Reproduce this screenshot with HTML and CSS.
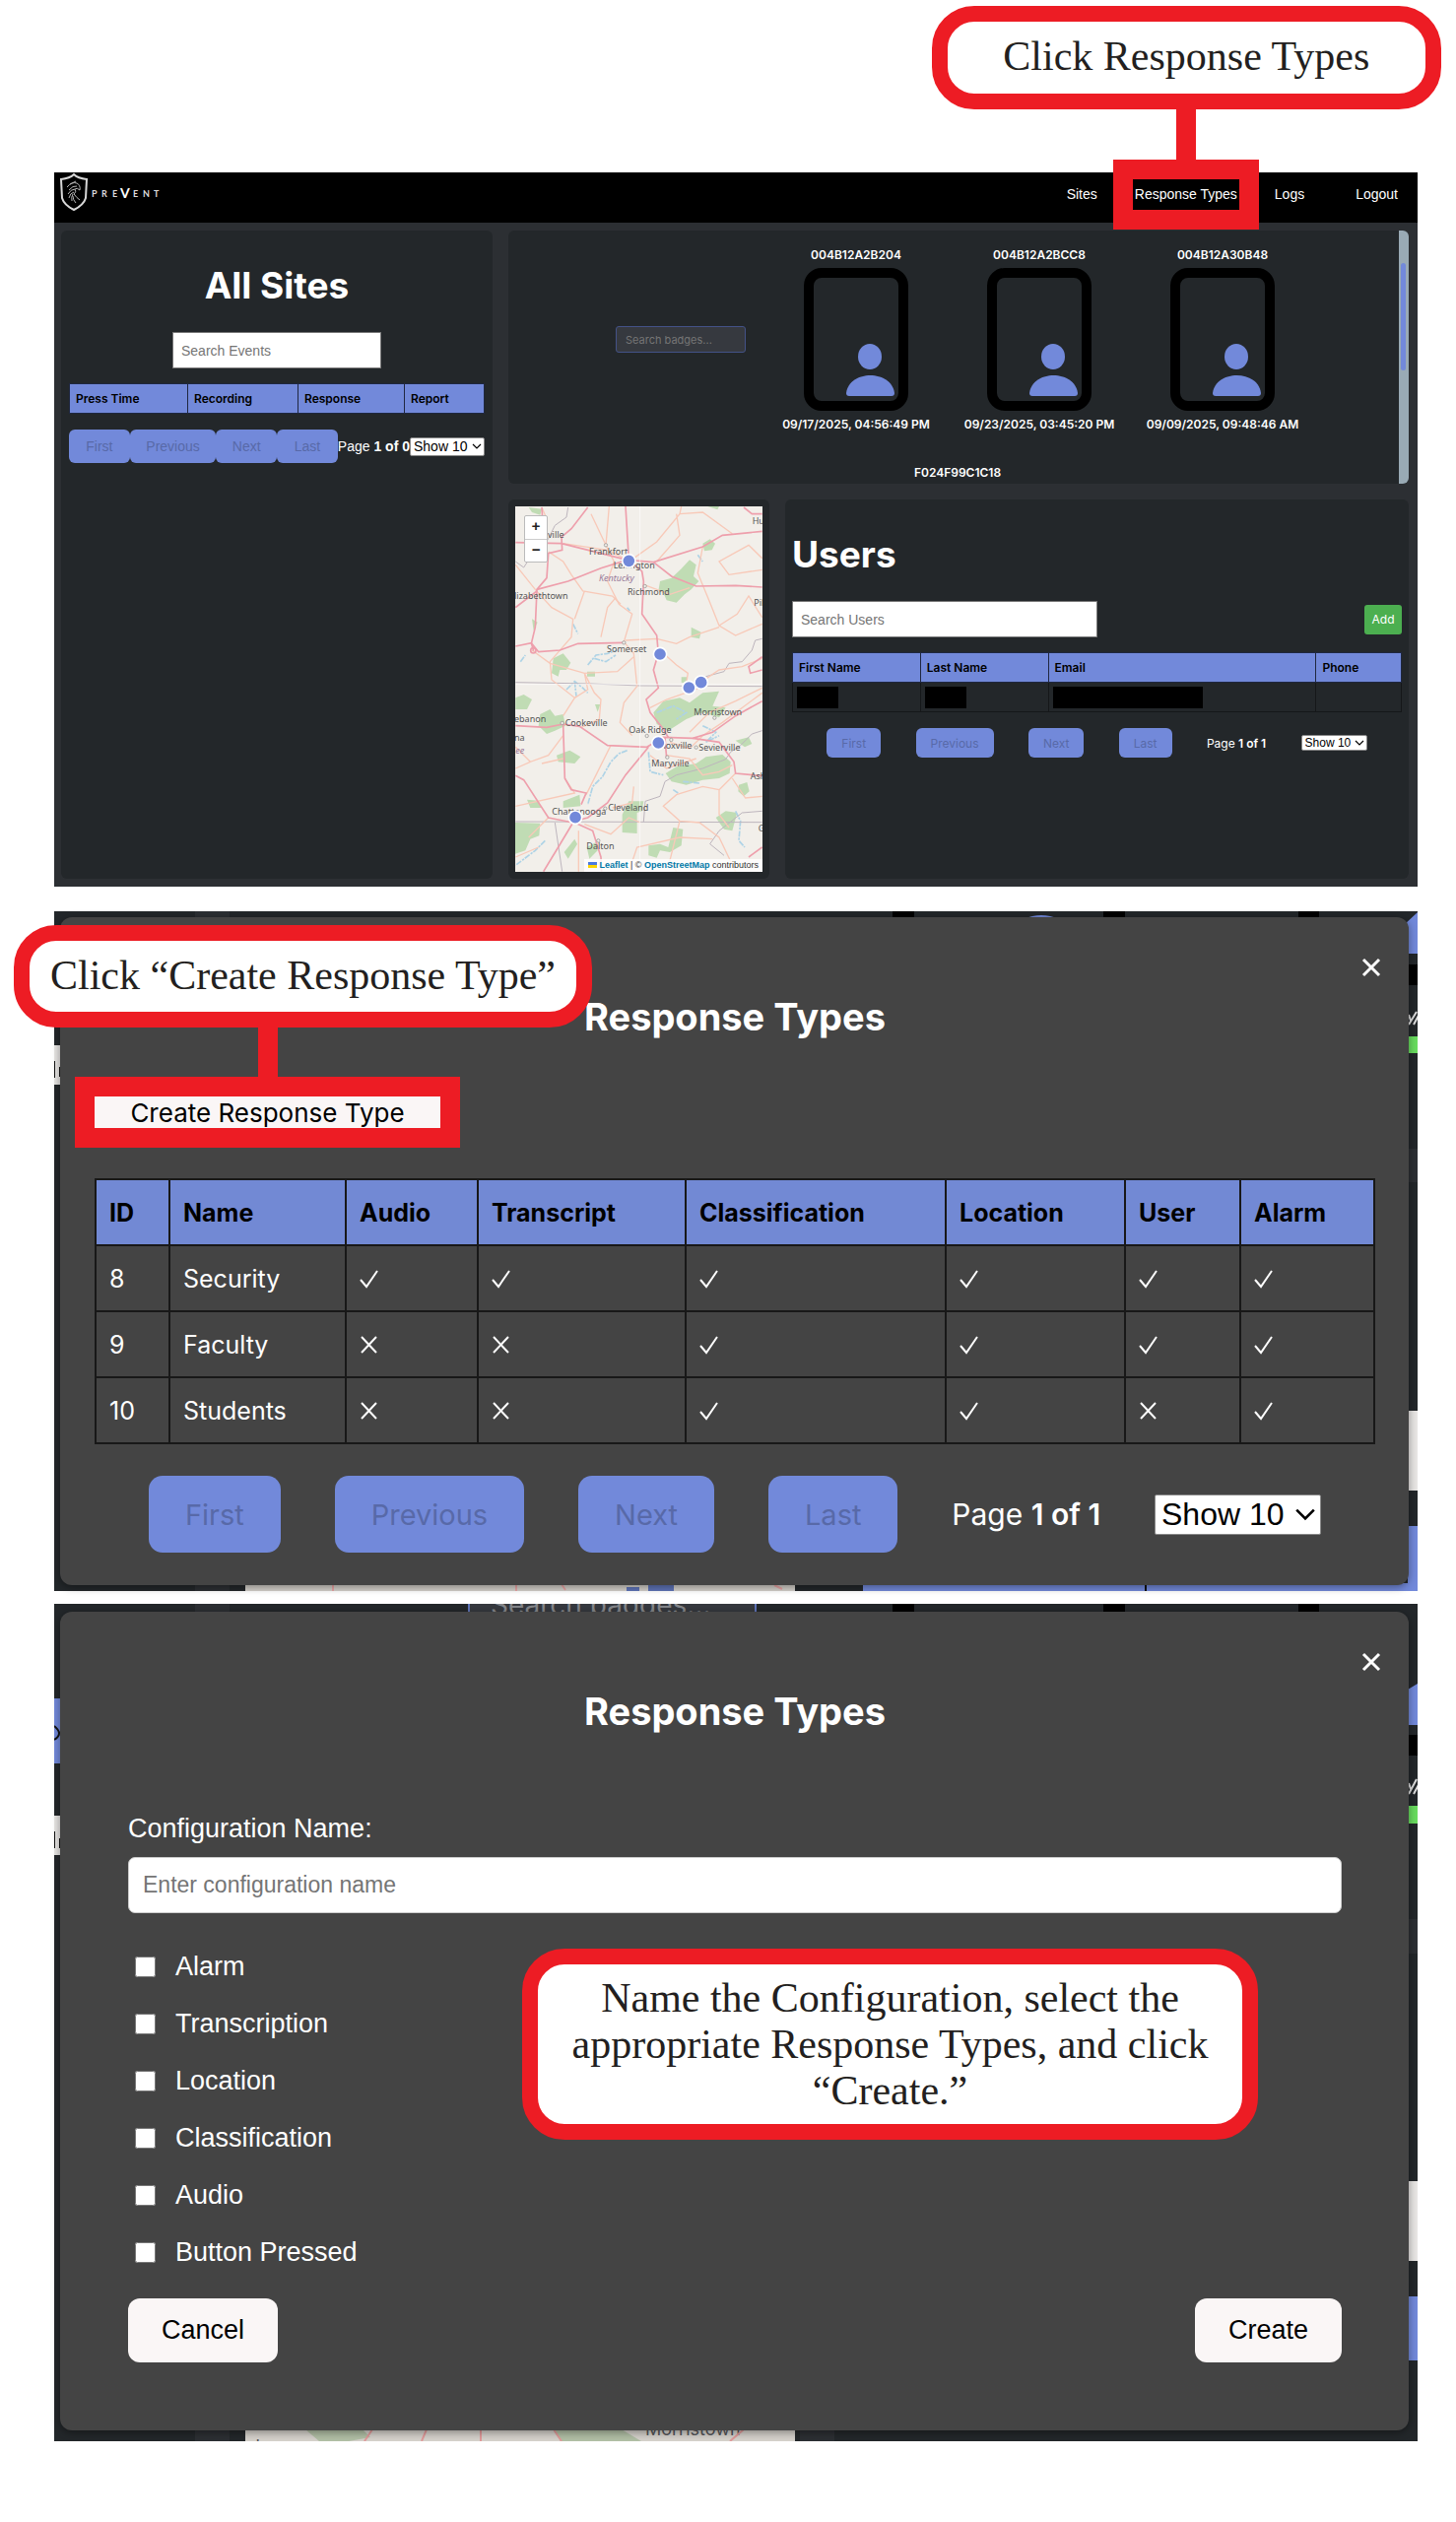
FILE: index.html
```html
<!DOCTYPE html>
<html lang="en">
<head>
<meta charset="utf-8">
<meta name="viewport" content="width=device-width, initial-scale=1">
<title>PreVent – Response Types guide</title>
<link rel="stylesheet" href="styles.css">
</head>
<body>
<main class="guide">

  <section class="shot dashboard">
    <header class="topbar">
      <svg class="logo" width="110" height="44" viewBox="0 0 110 44" role="img" aria-label="PreVent">
        <path d="M1 7 Q10 6 14 2 Q18 6 27 7 L26 26 Q24 33 14 38 Q4 33 2 26 Z" fill="none" stroke="#d8d8d8" stroke-width="2"/>
        <path d="M7 15 Q12 9 17 11 Q21 13 20 18 Q17 15 15 17 Q17 20 14 22 Q17 26 20 28 M9 18 Q13 13 17 14 M8 22 Q11 17 15 17 M9 26 Q10 21 14 20 M12 29 Q11 25 13 22 M16 31 Q13 28 13 24 M10 12 L16 9" fill="none" stroke="#b5b5b5"/>
        <g class="wordmark"><text x="32 42 53" y="25">PRE</text><text class="wordmark-v" x="61" y="26">V</text><text x="74 84 95" y="25">ENT</text></g>
      </svg>
      <nav class="nav">
        <a href="#sites">Sites</a>
        <span class="nav-target">
          <a href="#types">Response Types</a>
          <span class="marker"></span>
          <span class="callout callout-nav">Click Response Types</span>
        </span>
        <a href="#logs">Logs</a>
        <a class="logout" href="#logout">Logout</a>
      </nav>
    </header>

    <div class="board">
      <section class="panel events">
        <h1>All Sites</h1>
        <input class="search" type="text" placeholder="Search Events" aria-label="Search Events">
        <table class="grid-table">
          <colgroup><col class="c28"><col class="c27"><col class="c26"><col></colgroup>
          <thead><tr><th>Press Time</th><th>Recording</th><th>Response</th><th>Report</th></tr></thead>
        </table>
        <div class="pager pager-tight">
          <button disabled>First</button><button disabled>Previous</button><button disabled>Next</button><button disabled>Last</button>
          <span class="page-no">Page <b>1 of 0</b></span>
          <select aria-label="Rows per page"><option>Show 10</option></select>
        </div>
      </section>

      <section class="panel badges">
        <div class="badge-list">
          <input class="badge-search" type="text" placeholder="Search badges..." aria-label="Search badges">
          <div class="badge"><span>004B12A2B204</span>
            <div class="device"><svg width="49" height="53" viewBox="0 0 49 53"><ellipse cx="24" cy="13" rx="12" ry="13"/><path d="M0 50 C3 26 46 26 49 50 Q49 53 46 53 H3 Q0 53 0 50Z"/></svg></div>
            <span>09/17/2025, 04:56:49 PM</span></div>
          <div class="badge"><span>004B12A2BCC8</span>
            <div class="device"><svg width="49" height="53" viewBox="0 0 49 53"><ellipse cx="24" cy="13" rx="12" ry="13"/><path d="M0 50 C3 26 46 26 49 50 Q49 53 46 53 H3 Q0 53 0 50Z"/></svg></div>
            <span>09/23/2025, 03:45:20 PM</span></div>
          <div class="badge"><span>004B12A30B48</span>
            <div class="device"><svg width="49" height="53" viewBox="0 0 49 53"><ellipse cx="24" cy="13" rx="12" ry="13"/><path d="M0 50 C3 26 46 26 49 50 Q49 53 46 53 H3 Q0 53 0 50Z"/></svg></div>
            <span>09/09/2025, 09:48:46 AM</span></div>
          <div class="badge badge-next"><span>F024F99C1C18</span></div>
        </div>
        <div class="scroll-track"><div class="scroll-thumb"></div></div>
      </section>

      <section class="panel map-panel">
        <div class="map">
          <svg class="map-art" viewBox="69 72 753 1113" preserveAspectRatio="xMidYMid slice" aria-label="Map of Kentucky and Tennessee">
            <rect x="69" y="72" width="753" height="1113" fill="#f2efea"/>
            <g fill="#c0dcb4">
              <path d="M510 300 L545 290 L575 262 L600 235 L620 250 L612 285 L628 300 L605 325 L585 340 L560 365 L530 358 L520 335 L505 330Z"/>
              <path d="M640 185 L662 172 L678 185 L668 205 L645 208Z"/><path d="M605 440 L635 455 L630 475 L605 470Z"/>
              <path d="M185 535 L215 520 L238 548 L225 570 L205 570 L200 590 L180 580Z"/>
              <path d="M70 655 L95 645 L120 660 L105 690 L70 690Z"/><path d="M145 705 L175 690 L190 710 L215 705 L222 740 L190 755 L165 765 L140 740Z"/>
              <path d="M195 830 L235 815 L268 835 L250 855 L200 850Z"/>
              <path d="M490 700 L520 665 L570 655 L600 670 L640 640 L690 635 L670 680 L710 685 L690 715 L640 700 L590 720 L535 755 L500 735Z"/>
              <path d="M527 885 L560 865 L620 855 L650 835 L700 828 L725 850 L722 885 L690 900 L640 905 L590 920 L545 910Z"/>
              <path d="M750 920 L775 912 L782 940 L765 955 L748 940Z"/><path d="M740 785 L780 775 L790 795 L768 805Z"/>
              <path d="M395 1010 L415 970 L460 970 L455 1000 L440 1005 L440 1068 L395 1065Z"/>
              <path d="M475 1105 L510 1100 L535 1110 L550 1050 L580 1055 L575 1105 L540 1125 L510 1120 L500 1142 L475 1135Z"/>
              <path d="M69 1035 L145 1037 L142 1075 L115 1085 L100 1120 L69 1130Z"/><path d="M218 1125 L250 1085 L258 1100 L230 1145Z"/>
              <path d="M105 965 L140 968 L148 990 L115 990Z"/><path d="M215 970 L265 950 L268 985 L215 990Z"/>
              <path d="M680 1020 L710 1000 L745 1005 L730 1060 L705 1055Z"/><path d="M287 1110 L315 1095 L320 1120 L295 1145Z"/>
              <path d="M655 72 L690 72 L685 82Z M288 575 H312 V590 H288Z M312 675 L328 675 L320 698Z M575 592 L592 592 L590 610 L575 608Z M120 415 L137 425 L125 450Z M110 75 L150 80 L145 98 L120 90Z"/>
            </g>
            <g fill="none" stroke="#aed3e6" stroke-width="5" stroke-dasharray="18 3 7 4">
              <path d="M290 555 L315 525 L350 520 L380 510 M310 535 L345 545 L375 525"/><path d="M225 630 L250 605 L275 625 L290 640 M250 605 L255 650"/>
              <path d="M410 815 L385 825 L360 850 L335 895 L305 925 L290 980"/><path d="M475 820 L480 880 L520 890"/>
              <path d="M500 700 L550 680 L590 700 L560 720 M640 740 L680 760 L650 790 L690 770"/>
              <path d="M740 1000 L755 1030 L750 1090 L768 1110"/><path d="M160 1090 L130 1120 L70 1165"/>
              <path d="M245 430 L260 460 M85 545 L100 525 M625 220 L640 240 M410 380 L418 390 M550 935 L565 945 M580 910 L630 915"/>
            </g>
            <g fill="none" stroke="#bdb5bd" stroke-width="3">
              <path d="M70 608 L300 612 L450 618 L821 620"/><path d="M70 1032 L821 1034"/>
              <path d="M821 475 L800 480 L790 510 L760 545 L720 550 L705 575 L650 590 L635 618"/>
              <path d="M821 755 L790 765 L755 800 L725 820 L710 842 L640 870 L560 890 L525 910 L510 955 L465 970 L460 1033"/>
              <path d="M230 75 L225 105 L190 130 L170 170 L150 205 L110 235 L95 258 L70 240"/>
              <path d="M190 1035 L212 1184 M821 1000 L760 1005 L690 1060 L662 1100 L705 1135"/>
            </g>
            <g fill="none" stroke="#f8c9b8" stroke-width="4">
              <path d="M355 72 L345 190 L370 240 L350 300 L385 370 L425 400 L400 485 L430 520 L440 620 L400 670 L388 730 L425 770"/>
              <path d="M70 250 L130 325 L180 380 L245 415 L240 470 L175 545 L180 600 L250 655 L215 710"/>
              <path d="M170 210 L215 240 L240 280 L275 330 L365 345 L390 370 M280 330 L250 415 M215 185 L350 205 L405 232"/>
              <path d="M430 230 L500 180 L570 95 L575 72 M570 95 L640 90 L730 155 M500 240 L570 160 L560 95"/>
              <path d="M640 195 L625 275 L660 360 L690 435 L740 465 L821 430 M690 435 L745 400 L780 345 L821 410"/>
              <path d="M405 480 L500 475 L560 490 L600 470 L690 440 M330 470 L350 380 L375 350 M120 510 L175 550 L280 580 L380 575 L430 530"/>
              <path d="M510 510 L560 555 L595 580 L590 610 M630 610 L690 570 L760 560 L821 535 M480 685 L530 660 L630 625"/>
              <path d="M280 580 L310 640 L330 660 L325 720 L270 745 M250 655 L290 630 L280 580"/>
              <path d="M70 805 L115 850 L170 830 L215 770 M115 850 L70 870 M360 800 L320 880 L285 950"/>
              <path d="M540 790 L600 810 L640 770 L700 730 L821 640 M600 760 L660 700 L740 665 L821 625 M530 830 L600 840 L640 890 L690 880 L730 860"/>
              <path d="M480 830 L530 870 L620 840 M690 935 L690 1010 L720 1050 M690 935 L640 925 L560 950 L520 985 L570 1030 L630 1035 L690 1080 L740 1184"/>
              <path d="M740 885 L690 935 M821 955 L770 960 L730 900 M430 925 L425 975 L365 990 M280 1040 L360 1070 L415 1020 L450 1035 M415 1184 L440 1110 L570 1080 L670 1085"/>
              <path d="M220 900 L250 945 L70 985 M170 1020 L110 1080 M262 1060 L262 1184 M570 1030 L540 1150 L560 1184 M150 855 L215 840 M70 1140 L140 1110"/>
              <path d="M821 265 L720 280 L690 240 L780 190 L821 230 M460 310 L540 340 L600 320 M150 75 L165 110 M300 95 L345 190"/>
            </g>
            <g fill="none" stroke="#ee9fac" stroke-width="5">
              <path d="M405 72 L415 235 L455 270 L460 300 L455 400 L500 465 L505 520 L490 570 L505 625 L468 660 L480 700 L520 750 L535 775"/>
              <path d="M70 182 L210 185 L410 235 L490 242 L640 195 L700 160 L821 148 M290 75 L240 140 L210 165 L212 205 L170 215 L165 290 L135 325 L130 440 L118 490"/>
              <path d="M490 242 L545 285 L620 315 L740 313 L821 318 M135 325 L230 300 L330 260 L410 235 M70 380 L135 330"/>
              <path d="M70 498 L118 488 L140 515 L205 510 L260 490 L400 487 M118 488 L125 512"/>
              <path d="M70 740 L165 745 L215 735 L265 742 L350 800 L470 805 L520 775 L610 778 L670 760 L740 710 L821 665"/>
              <path d="M215 735 L220 900 L240 935 L285 945 L270 980 M475 805 L405 890 L350 975 L290 1020 L250 1030"/>
              <path d="M610 778 L690 790 L735 850 L740 885 L821 893 M70 892 L95 905 L170 1020 L245 1035 L200 1110 L155 1184 M250 1035 L305 1060 L330 1140 L332 1184"/>
              <path d="M525 775 L530 840 M150 75 L155 160 M765 75 L790 95 L821 95 M821 530 L780 560 L785 580 L821 570 M780 1140 L821 1110"/>
              <circle cx="124" cy="511" r="8"/>
            </g>
            <g stroke="#fff" stroke-opacity=".6" stroke-width="3"><path d="M449 72V1184M70 614H821"/></g>
            <g fill="#f2efea" stroke="#888" stroke-width="2"><circle cx="345" cy="190" r="5"/><circle cx="464" cy="315" r="5"/><circle cx="400" cy="487" r="5"/><circle cx="212" cy="732" r="5"/><circle cx="470" cy="771" r="5"/><circle cx="544" cy="783" r="5"/><circle cx="532" cy="836" r="5"/><circle cx="620" cy="806" r="5"/><circle cx="676" cy="716" r="5"/><circle cx="343" cy="992" r="5"/><circle cx="322" cy="1090" r="5"/></g>
            <g class="places">
              <text x="168" y="167">ville</text><text x="294" y="219">Frankfort</text><text x="368" y="262">Lexington</text>
              <text class="state" x="324" y="301">Kentucky</text><text x="411" y="341">Richmond</text><text x="66" y="355">lizabethtown</text>
              <text x="791" y="126">Hu</text><text x="796" y="376">Pik</text><text x="348" y="515">Somerset</text><text x="613" y="708">Morristown</text>
              <text x="66" y="728">ebanon</text><text x="221" y="740">Cookeville</text><text x="415" y="761">Oak Ridge</text><text x="494" y="809">Knoxville</text>
              <text x="628" y="817">Sevierville</text><text x="484" y="863">Maryville</text><text x="66" y="787">na</text><text class="state" x="70" y="825">ee</text>
              <text x="785" y="902">Ash</text><text x="181" y="1010">Chattanooga</text><text x="352" y="999">Cleveland</text><text x="286" y="1116">Dalton</text><text x="809" y="1061">G</text>
            </g>
            <g class="pins"><circle cx="415" cy="238" r="20"/><circle cx="510" cy="522" r="20"/><circle cx="635" cy="608" r="20"/><circle cx="598" cy="624" r="20"/><circle cx="505" cy="792" r="20"/><circle cx="252" cy="1019" r="20"/></g>
          </svg>
          <div class="zoom-box"><button aria-label="Zoom in">+</button><button aria-label="Zoom out">−</button></div>
          <p class="credit"><svg width="9" height="6" viewBox="0 0 9 6"><path fill="#4c7be1" d="M0 0h9v3H0z"/><path fill="#ffd500" d="M0 3h9v3H0z"/></svg> <a href="#leaflet">Leaflet</a> | © <a href="#osm">OpenStreetMap</a> contributors</p>
        </div>
      </section>

      <section class="panel users">
        <h1>Users</h1>
        <div class="users-tools">
          <input class="search search-wide" type="text" placeholder="Search Users" aria-label="Search Users">
          <button class="add">Add</button>
        </div>
        <table class="grid-table">
          <colgroup><col class="c21"><col class="c21"><col class="c44"><col></colgroup>
          <thead><tr><th>First Name</th><th>Last Name</th><th>Email</th><th>Phone</th></tr></thead>
          <tbody><tr><td><span class="redacted"></span></td><td><span class="redacted"></span></td><td><span class="redacted redacted-long"></span></td><td></td></tr></tbody>
        </table>
        <div class="pager pager-small">
          <button disabled>First</button><button disabled>Previous</button><button disabled>Next</button><button disabled>Last</button>
          <span class="page-no">Page <b>1 of 1</b></span>
          <select aria-label="Rows per page"><option>Show 10</option></select>
        </div>
      </section>
    </div>
  </section>

  <section class="shot shot-list">
    <svg class="backdrop" viewBox="0 0 1384 690" preserveAspectRatio="none" aria-hidden="true">
      <path fill="#2c2f33" d="M143 0h35v8h-35z M143 682h35v8h-35z M1375 241h9v34h-9z"/>
      <path fill="#000" d="M851 0h22v8h-22z M1065 0h22v8h-22z M1263 0h21v8h-21z M1374 54h10v21h-10z"/>
      <path fill="#7289da" d="M984 8 Q1002 0 1020 8z M1370 14 L1384 1 V43 H1370z M821 682h563v8H821z M1374 624h10v66h-10z"/>
      <path fill="#69dc5f" d="M1374 127h10v17h-10z"/>
      <path fill="#e8e6e4" d="M0 136h8v40H0z M1374 507h10v81h-10z"/>
      <path fill="#d5d1cb" d="M194 682h558v8H194z"/>
      <path fill="#5f74b8" d="M603 682h26v8h-26z M581 686h13v4h-13z"/>
      <path fill="none" stroke="#ddd" stroke-width="2" d="M1375 115l8-13M1380 115l6-11M1375 105l2 6"/>
      <path fill="none" stroke="#111" stroke-width="2" d="M0 152v17M6 158v10M1108 684v8"/>
      <path fill="none" stroke="#e8a5a5" stroke-width="2" d="M283 684v6M469 684v6M515 683l4 6M731 684l8 4"/>
    </svg>
    <div class="modal">
      <button class="close" aria-label="Close"><svg width="20" height="20" viewBox="0 0 20 20"><path d="M2 2L18 18M18 2L2 18"/></svg></button>
      <h2>Response Types</h2>
      <div class="create-target">
        <button class="create-type">Create Response Type</button>
        <span class="stem"></span>
        <span class="callout callout-create">Click “Create Response Type”</span>
      </div>
      <table class="types">
        <colgroup><col class="t-id"><col class="t-name"><col class="t-audio"><col class="t-trans"><col class="t-class"><col class="t-loc"><col class="t-user"><col></colgroup>
        <thead><tr><th>ID</th><th>Name</th><th>Audio</th><th>Transcript</th><th>Classification</th><th>Location</th><th>User</th><th>Alarm</th></tr></thead>
        <tbody>
          <tr><td>8</td><td>Security</td><td><i class="yes"></i></td><td><i class="yes"></i></td><td><i class="yes"></i></td><td><i class="yes"></i></td><td><i class="yes"></i></td><td><i class="yes"></i></td></tr>
          <tr><td>9</td><td>Faculty</td><td><i class="no"></i></td><td><i class="no"></i></td><td><i class="yes"></i></td><td><i class="yes"></i></td><td><i class="yes"></i></td><td><i class="yes"></i></td></tr>
          <tr><td>10</td><td>Students</td><td><i class="no"></i></td><td><i class="no"></i></td><td><i class="yes"></i></td><td><i class="yes"></i></td><td><i class="no"></i></td><td><i class="yes"></i></td></tr>
        </tbody>
      </table>
      <div class="pager pager-large">
        <button disabled>First</button><button disabled>Previous</button><button disabled>Next</button><button disabled>Last</button>
        <span class="page-no">Page <b>1 of 1</b></span>
        <select aria-label="Rows per page"><option>Show 10</option></select>
      </div>
    </div>
  </section>

  <section class="shot shot-form">
    <svg class="backdrop" viewBox="0 0 1384 850" preserveAspectRatio="none" aria-hidden="true">
      <path fill="#2c2f33" d="M143 0h35v10h-35z M143 836h35v14h-35z M757 836h35v14h-35z M1375 320h9v35h-9z"/>
      <path fill="#36393f" stroke="#5f74b8" stroke-width="2" d="M421-2h291v20h-291z"/>
      <text class="ghost" x="443" y="11">Search badges...</text>
      <path fill="#000" d="M851 0h22v10h-22z M1065 0h22v10h-22z M1263 0h21v10h-21z M1374 133h10v21h-10z"/>
      <path fill="#7289da" d="M1374 87 L1384 81 V123 H1374z M1374 703h10v65h-10z M0 96h8v66H0z"/>
      <path fill="#69dc5f" d="M1374 205h10v18h-10z"/>
      <path fill="#e8e6e4" d="M0 215h8v40H0z M1374 586h10v81h-10z"/>
      <path fill="#d5d1cb" d="M194 836h558v14H194z"/>
      <path fill="#b1bfa5" d="M255 838h58l8 8-22 4h-30z M506 838h70l20 12h-82z"/>
      <text class="ghost ghost-map" x="600" y="844">Morristown</text>
      <text class="ghost ghost-map" x="194" y="862">ebanon</text>
      <path fill="none" stroke="#ddd" stroke-width="2" d="M1375 193l8-15M1380 193l6-11M1375 182l2 6"/>
      <path fill="none" stroke="#111" stroke-width="2" d="M0 231v17M6 238v10M0 124q10 8 0 14"/>
      <path fill="none" stroke="#e09a9a" stroke-width="2" d="M323 838l-8 12M378 838l-5 12M433 838v12M507 838l8 12M700 838l-14 12"/>
    </svg>
    <div class="modal modal-form">
      <button class="close" aria-label="Close"><svg width="20" height="20" viewBox="0 0 20 20"><path d="M2 2L18 18M18 2L2 18"/></svg></button>
      <h2>Response Types</h2>
      <form class="config">
        <label class="field-label" for="config-name">Configuration Name:</label>
        <input id="config-name" class="field" type="text" placeholder="Enter configuration name">
        <div class="options">
          <label><input type="checkbox">Alarm</label>
          <label><input type="checkbox">Transcription</label>
          <label><input type="checkbox">Location</label>
          <label><input type="checkbox">Classification</label>
          <label><input type="checkbox">Audio</label>
          <label><input type="checkbox">Button Pressed</label>
          <p class="callout callout-form">Name the Configuration, select the<br>appropriate Response Types, and click<br>“Create.”</p>
        </div>
        <div class="actions"><button type="button">Cancel</button><button type="button">Create</button></div>
      </form>
    </div>
  </section>
</main>
</body>
</html>
```
FILE: styles.css
```css
* { box-sizing: border-box; }
body { margin: 0; background: #fff; color: #fff; font-family: Inter, "Liberation Sans", sans-serif; }
h1, h2, p { margin: 0; }
button, input, select { font-family: inherit; margin: 0; }
a { color: inherit; text-decoration: none; }

.guide { padding: 175px 39px 82px 55px; }
.shot { position: relative; background: #23272a; }

/* Red annotations */
.callout {
  position: absolute; z-index: 3; display: block;
  border: 16px solid #ed1c24; border-radius: 43px; background: #fff; color: #231f20;
  font: 42px/47px "Liberation Serif", serif; text-align: center; white-space: nowrap;
}
.callout-nav { left: 50%; bottom: 94px; width: 517px; height: 105px; margin-left: -258px; padding: 12px 0; }
.callout-create { left: -82px; bottom: 102px; width: 587px; height: 104px; padding: 12px 0; }
.callout-form { left: 400px; top: 11px; width: 747px; padding: 11px 0 10px; }
.marker { position: absolute; z-index: 2; left: -22px; right: -22px; top: -27px; height: 71px; border: 20px solid #ed1c24; }
.marker::before { content: ""; position: absolute; left: 50%; top: -72px; width: 20px; height: 54px; margin-left: -10px; background: #ed1c24; }

/* Dashboard */
.dashboard { background: #2c2f33; }
.topbar { display: flex; justify-content: space-between; height: 51px; background: #000; padding: 0 20px 0 6px; }
.wordmark { fill: #ddd; font: bold 9px Lato, sans-serif; }
.wordmark-v { font-size: 14px; fill: #fff; }
.nav { display: flex; gap: 38px; padding-top: 14px; font: 14px/16px "Liberation Sans", sans-serif; }
.nav-target { position: relative; height: 16px; }
.logout { margin-left: 14px; }
.board {
  display: grid; grid-template-columns: 438fr 265fr 633fr; grid-template-rows: 257px 385px;
  gap: 16px; padding: 8px 9px 8px 7px;
}
.panel { background: #23272a; border-radius: 6px; min-width: 0; }
h1 { font-size: 37px; line-height: 46px; font-weight: 700; }
.events { grid-row: 1 / 3; padding: 33px 8px; }
.events h1 { text-align: center; }
.search { display: block; width: 212px; height: 37px; margin: 24px auto 15px; padding: 0 8px; border: 1px solid #777; background: #fff; font: 14px "Liberation Sans", sans-serif; }
::placeholder { color: #757575; opacity: 1; }
.grid-table { width: 100%; table-layout: fixed; border-collapse: collapse; font-size: 12px; line-height: 16px; }
.grid-table th { height: 30px; padding: 0 6px; border: 1px solid #1f2740; background: #7289da; color: #000; text-align: left; font-weight: 600; }
.grid-table td { height: 30px; padding: 0 4px; border: 1px solid #151719; }
.c28 { width: 120px; } .c27 { width: 112px; } .c26 { width: 108px; }
.c21 { width: 21%; } .c44 { width: 44%; }
.redacted { display: block; width: 42px; height: 22px; background: #000; }
.redacted-long { width: 152px; }

.pager { display: flex; align-items: center; }
.pager button { border: 0; border-radius: 6px; background: #7289da; color: #5869a8; white-space: nowrap; }
.pager select {
  appearance: none; border: 1px solid #888; border-radius: 2px; color: #000; padding: 0 0 0 3px;
  font-family: "Liberation Sans", sans-serif;
  background: #fff url("data:image/svg+xml,%3Csvg xmlns='http://www.w3.org/2000/svg' viewBox='0 0 10 10'%3E%3Cpath d='M1 3l4 4 4-4' fill='none' stroke='%23000' stroke-width='1.2'/%3E%3C/svg%3E") no-repeat right 2px center / 10px;
}
.page-no { white-space: nowrap; }
.page-no b { font-weight: 600; }
.pager-tight { margin-top: 16px; font: 14px "Liberation Sans", sans-serif; }
.pager-tight button { height: 34px; padding: 0; font-size: 14px; flex: 62 0 0; }
.pager-tight button:nth-child(2) { flex-grow: 88; }
.pager-tight .page-no { font-size: 14px; }
.pager-tight select { width: 76px; height: 19px; font-size: 14px; }

.badges { grid-column: 2 / 4; display: flex; overflow: hidden; }
.badge-list { flex: 1; display: flex; flex-wrap: wrap; justify-content: center; align-content: flex-start; column-gap: 30px; padding: 16px 0 0 8px; }
.badge-search { width: 132px; height: 27px; margin: 81px 4px 0 0; padding: 0 9px; border: 1px solid #435287; border-radius: 3px; background: #36393f; font: 11px Inter, sans-serif; }
.badge { width: 156px; display: flex; flex-direction: column; align-items: center; font-size: 12px; line-height: 18px; font-weight: 600; white-space: nowrap; }
.device { display: flex; align-items: flex-end; justify-content: flex-end; width: 106px; height: 145px; margin: 4px 0 5px; padding: 0 4px 5px 0; border: 10px solid #000; border-radius: 18px; }
.device svg { fill: #7289da; }
.badge-next { width: 100%; margin-top: 31px; }
.scroll-track { width: 10px; padding-left: 2px; background: #99aab5; }
.scroll-thumb { width: 5px; height: 109px; margin-top: 33px; border-radius: 3px; background: #7289da; }

.map-panel { padding: 7px; }
.map { position: relative; height: 100%; overflow: hidden; }
.map-art { display: block; width: 100%; height: 100%; }
.places { fill: #555; font: 27px "Noto Sans", sans-serif; }
.places .state { fill: #997a99; font-style: italic; }
.pins { fill: #7289da; stroke: #fff; stroke-width: 5; }
.zoom-box { position: absolute; left: 9px; top: 9px; display: grid; width: 24px; border: 1px solid #bbb; border-radius: 2px; background: #fff; }
.zoom-box button { height: 23px; padding: 0; border: 0; background: none; color: #222; font: bold 15px "Liberation Mono", monospace; }
.zoom-box button + button { border-top: 1px solid #ccc; }
.credit { position: absolute; right: 0; bottom: 0; padding: 0 4px; background: rgba(255,255,255,.8); color: #333; font: 9px/13px "Liberation Sans", sans-serif; white-space: nowrap; }
.credit a { color: #0078a8; font-weight: bold; }

.users { padding: 33px 7px; }
.users-tools { display: flex; align-items: center; justify-content: space-between; margin: 24px 0 15px; }
.users-tools .search { width: 310px; margin: 0; }
.add { width: 38px; height: 30px; padding: 0; border: 0; border-radius: 3px; background: #4caf50; color: #fff; font-size: 12px; }
.pager-small { justify-content: space-evenly; margin-top: 16px; font-size: 12px; }
.pager-small button { height: 30px; padding: 0 15px; font-size: 12px; }
.pager-small select { width: 67px; height: 16px; font-size: 12px; }

/* Modals */
.backdrop { position: absolute; inset: 0; width: 100%; height: 100%; }
.ghost { fill: #84868a; font: 28px Inter, sans-serif; }
.ghost-map { fill: #55565a; font-size: 18px; }
.shot-list { margin-top: 25px; padding: 6px 9px 6px 6px; }
.shot-form { margin-top: 13px; padding: 8px 9px 11px 6px; }
.modal { position: relative; padding: 77px 34px 33px 35px; border-radius: 12px; background: #444; box-shadow: 0 2px 8px rgba(0,0,0,.4); }
.modal h2 { font-size: 38px; line-height: 48px; font-weight: 700; text-align: center; }
.close { position: absolute; right: 24px; top: 37px; width: 28px; height: 28px; padding: 4px; border: 0; background: none; }
.close svg { display: block; fill: none; stroke: #fff; stroke-width: 3; }
.create-target { position: relative; z-index: 2; width: 391px; margin: 37px 0 31px -20px; border: 20px solid #ed1c24; }
.create-type { display: block; width: 100%; height: 32px; padding: 0; border: 0; background: #faf6f6; color: #000; font: 26px/34px Inter, sans-serif; white-space: nowrap; }
.stem { position: absolute; left: 50%; bottom: 50px; width: 20px; height: 54px; margin-left: -10px; background: #ed1c24; }

.types { width: 100%; table-layout: fixed; border-collapse: collapse; font-size: 25px; line-height: 32px; }
.types th, .types td { height: 67px; padding: 0 13px; border: 2px solid #181818; text-align: left; }
.types th { background: #7289d4; color: #000; font-weight: 700; }
.t-id { width: 75px; } .t-name { width: 179px; } .t-audio { width: 134px; } .t-trans { width: 211px; }
.t-class { width: 264px; } .t-loc { width: 182px; } .t-user { width: 117px; }
.yes, .no { display: block; width: 20px; height: 20px; background: center / contain no-repeat; }
.yes { background-image: url("data:image/svg+xml,%3Csvg xmlns='http://www.w3.org/2000/svg' viewBox='0 0 20 20'%3E%3Cpath d='M1 11l6 7L18 2' fill='none' stroke='%23fff' stroke-width='2'/%3E%3C/svg%3E"); }
.no { background-image: url("data:image/svg+xml,%3Csvg xmlns='http://www.w3.org/2000/svg' viewBox='0 0 20 20'%3E%3Cpath d='M2 2l15 16M17 2L2 18' fill='none' stroke='%23fff' stroke-width='2'/%3E%3C/svg%3E"); }
.pager-large { justify-content: space-evenly; margin-top: 32px; font-size: 30px; }
.pager-large button { height: 78px; padding: 0 37px; border-radius: 14px; font-size: 29px; }
.pager-large select { width: 169px; height: 41px; padding-left: 6px; font-size: 32px; background-size: 22px; background-position: right 4px center; }

.modal-form { padding: 77px 68px 69px 69px; }
.config { margin-top: 79px; font: 27px/32px "Liberation Sans", sans-serif; }
.field-label { display: block; }
.field { display: block; width: 100%; height: 57px; margin: 13px 0 25px; padding: 0 14px; border: 1px solid #ccc; border-radius: 7px; background: #fff; font: 23px "Liberation Sans", sans-serif; }
.options { position: relative; }
.options label { display: flex; align-items: center; gap: 20px; width: fit-content; height: 58px; padding-left: 7px; }
.options input { width: 21px; height: 21px; }
.actions { display: flex; justify-content: space-between; margin-top: 18px; }
.actions button { height: 65px; padding: 0 34px; border: 0; border-radius: 12px; background: #faf6f6; color: #000; font: 27px "Liberation Sans", sans-serif; }
```
